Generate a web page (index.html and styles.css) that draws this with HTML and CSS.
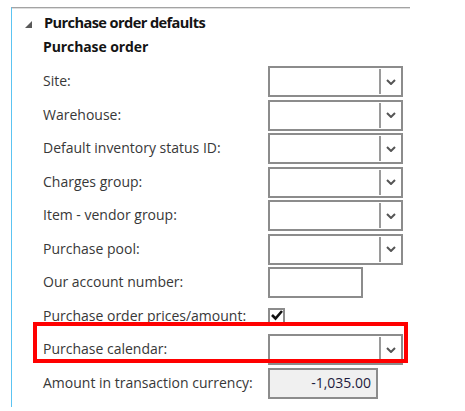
FILE: index.html
```html
<!DOCTYPE html>
<html>
<head>
<meta charset="utf-8">
<link rel="stylesheet" href="styles.css">
</head>
<body>
<div class="panel">
  <div class="group-title">
    <svg class="collapse" width="7" height="7" viewBox="0 0 7 7"><polygon points="7,0 7,7 0,7" fill="#595959"/></svg>
    <span>Purchase order defaults</span>
  </div>
  <div class="section-title">Purchase order</div>
  <div class="form">
    <div class="label">Site:</div>
    <div class="combo"><span class="combo-btn"><svg width="10" height="6" viewBox="0 0 10 6"><polyline points="1,1 5,5 9,1" fill="none" stroke="#555" stroke-width="2"/></svg></span></div>

    <div class="label">Warehouse:</div>
    <div class="combo"><span class="combo-btn"><svg width="10" height="6" viewBox="0 0 10 6"><polyline points="1,1 5,5 9,1" fill="none" stroke="#555" stroke-width="2"/></svg></span></div>

    <div class="label">Default inventory status ID:</div>
    <div class="combo"><span class="combo-btn"><svg width="10" height="6" viewBox="0 0 10 6"><polyline points="1,1 5,5 9,1" fill="none" stroke="#555" stroke-width="2"/></svg></span></div>

    <div class="label">Charges group:</div>
    <div class="combo"><span class="combo-btn"><svg width="10" height="6" viewBox="0 0 10 6"><polyline points="1,1 5,5 9,1" fill="none" stroke="#555" stroke-width="2"/></svg></span></div>

    <div class="label">Item - vendor group:</div>
    <div class="combo"><span class="combo-btn"><svg width="10" height="6" viewBox="0 0 10 6"><polyline points="1,1 5,5 9,1" fill="none" stroke="#555" stroke-width="2"/></svg></span></div>

    <div class="label">Purchase pool:</div>
    <div class="combo"><span class="combo-btn"><svg width="10" height="6" viewBox="0 0 10 6"><polyline points="1,1 5,5 9,1" fill="none" stroke="#555" stroke-width="2"/></svg></span></div>

    <div class="label">Our account number:</div>
    <div class="textbox short"></div>

    <div class="label">Purchase order prices/amount:</div>
    <div class="checkcell"><span class="checkbox"><svg width="14" height="12" viewBox="0 0 14 12"><polyline points="2,6 5.5,9.5 12,2" fill="none" stroke="#111" stroke-width="2.6"/></svg></span></div>

    <div class="label">Purchase calendar:</div>
    <div class="combo"><span class="combo-btn"><svg width="10" height="6" viewBox="0 0 10 6"><polyline points="1,1 5,5 9,1" fill="none" stroke="#555" stroke-width="2"/></svg></span></div>

    <div class="label">Amount in transaction currency:</div>
    <div class="textbox amount">-1,035.00</div>
  </div>
  <div class="highlight"></div>
</div>
</body>
</html>
```

FILE: styles.css
```css
html, body {
  margin: 0;
  padding: 0;
  background: #ffffff;
}

body {
  font-family: "Open Sans", "Noto Sans", sans-serif;
  color: #333333;
}

.panel {
  position: relative;
  margin: 7px 0 0 11px;
  width: 399px;
  height: 400px;
  border-left: 1px solid #5cc4f2;
  border-top: 1px solid #a3a3a3;
  box-shadow: inset 0 1px 0 #dedede;
  box-sizing: border-box;
}

.group-title {
  display: flex;
  align-items: center;
  height: 26px;
  padding-top: 1px;
  padding-left: 13px;
  font-size: 14.6px;
  font-weight: 700;
  letter-spacing: -0.6px;
  color: #141414;
}

.collapse {
  margin-right: 12px;
  margin-top: 4px;
}

.section-title {
  padding-left: 31px;
  height: 30px;
  line-height: 24px;
  font-size: 14px;
  font-weight: 700;
  letter-spacing: -0.1px;
  color: #141414;
}

.form {
  display: grid;
  grid-template-columns: 225px 135px;
  grid-auto-rows: 33.5px;
  align-items: start;
  padding-left: 31px;
  margin-top: 1px;
}

.label {
  height: 31px;
  line-height: 30px;
  font-size: 14px;
  color: #383838;
  white-space: nowrap;
}

.combo {
  position: relative;
  height: 31px;
  width: 135px;
  border: 2px solid #8c8c8c;
  box-sizing: border-box;
  background: #fff;
  display: flex;
  justify-content: flex-end;
}

.combo-btn {
  width: 20px;
  margin: 1px 0;
  border-left: 2px solid #9a9a9a;
  display: flex;
  align-items: center;
  justify-content: center;
}

.textbox {
  height: 31px;
  border: 2px solid #8c8c8c;
  box-sizing: border-box;
  background: #fff;
}

.short {
  width: 95px;
}

.amount {
  width: 110px;
  background: #f0f0f0;
  text-align: right;
  padding-right: 5px;
  font-size: 14px;
  line-height: 26px;
  color: #1e1b3d;
}

.checkcell {
  height: 31px;
  display: flex;
  align-items: center;
}

.checkbox {
  width: 17px;
  height: 17px;
  border: 2px solid #8c8c8c;
  box-sizing: border-box;
  background: #fff;
  display: flex;
  align-items: flex-start;
  justify-content: center;
  overflow: visible;
}

.checkbox svg {
  margin-top: -1px;
  flex: none;
}

.highlight {
  position: absolute;
  left: 21px;
  top: 314px;
  width: 375px;
  height: 41px;
  border: 4px solid #ff0000;
  box-sizing: border-box;
}
```
